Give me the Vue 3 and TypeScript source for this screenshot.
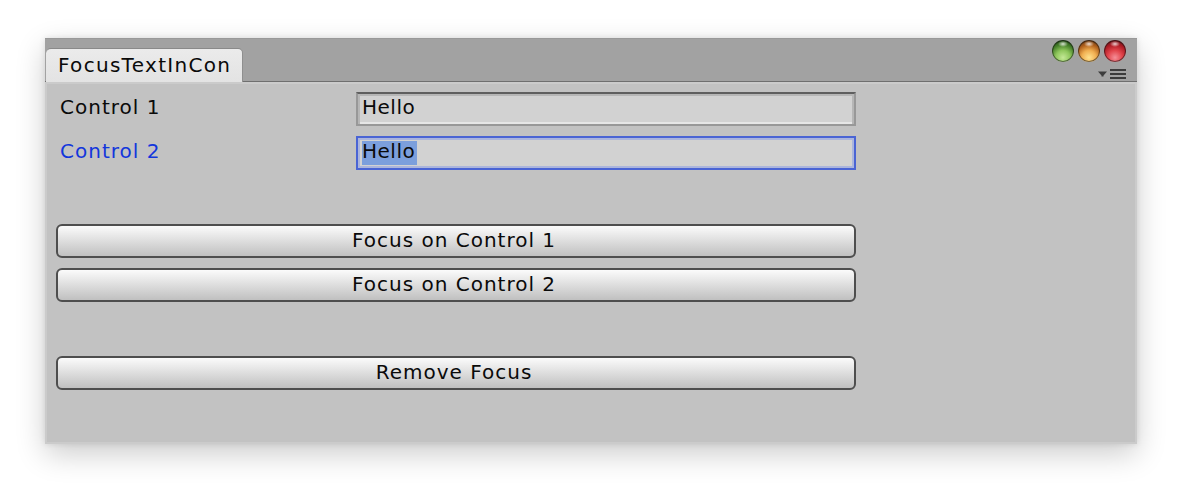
<script setup lang="ts">
const fields = [
  { label: 'Control 1', value: 'Hello', focused: false },
  { label: 'Control 2', value: 'Hello', focused: true },
]
const lights = ['green', 'orange', 'red']
const group1 = ['Focus on Control 1', 'Focus on Control 2']
</script>

<template>
  <div class="page">
    <div class="window">
      <div class="titlebar">
        <div class="tab">FocusTextInCon</div>
        <div class="controls">
          <div class="lights">
            <span v-for="l in lights" :key="l" class="light" :class="l"></span>
          </div>
          <svg class="menu" width="29" height="11" viewBox="0 0 29 11">
            <path d="M0 2.5h9L5.5 6.5v1h-2v-1z" fill="#3c3c3c" />
            <path d="M12 1h16M12 5h16M12 9h16" stroke="#3c3c3c" stroke-width="2" />
          </svg>
        </div>
      </div>
      <div class="content">
        <div class="rows">
          <div v-for="f in fields" :key="f.label" class="row">
            <span class="label" :class="{ active: f.focused }">{{ f.label }}</span>
            <div class="field" :class="{ focused: f.focused }">
              <span class="value">{{ f.value }}</span>
            </div>
          </div>
        </div>
        <div class="buttons">
          <button v-for="b in group1" :key="b" class="btn">{{ b }}</button>
        </div>
        <div class="buttons">
          <button class="btn">Remove Focus</button>
        </div>
      </div>
    </div>
  </div>
</template>

<style>
html, body { margin: 0; background: #fff; }
</style>

<style scoped>
.page {
  width: 1182px;
  height: 498px;
  padding: 38px 45px 0;
  box-sizing: border-box;
  overflow: hidden;
  font-family: "DejaVu Sans", sans-serif;
  font-size: 20px;
  letter-spacing: 1px;
  color: #0a0a0a;
}
.window {
  width: 1092px;
  height: 406px;
  display: flex;
  flex-direction: column;
  box-shadow: 0 10px 28px rgba(0, 0, 0, 0.2), 0 0 6px rgba(0, 0, 0, 0.1);
}
.titlebar {
  flex: none;
  display: flex;
  justify-content: space-between;
  align-items: flex-end;
  height: 42px;
  padding-left: 1px;
  background: #a2a2a2;
  border-top: 1px solid #999;
  border-bottom: 1px solid #6f6f6f;
}
.tab {
  width: 197px;
  height: 34px;
  margin-bottom: -1px;
  box-sizing: border-box;
  padding-left: 12px;
  line-height: 32px;
  letter-spacing: 1.3px;
  background: linear-gradient(#ebebeb, #e3e3e3);
  border-radius: 5px 5px 0 0;
  border-top: 1px solid #8a8a8a;
  border-right: 1px solid #8f8f8f;
  white-space: nowrap;
  overflow: hidden;
}
.controls {
  display: flex;
  flex-direction: column;
  align-items: flex-end;
  padding-right: 10px;
  height: 100%;
  box-sizing: border-box;
}
.lights {
  display: flex;
  gap: 4px;
  padding-top: 1px;
  margin-right: 1px;
}
.light {
  width: 22px;
  height: 22px;
  border-radius: 50%;
  box-sizing: border-box;
  box-shadow: inset 0 0 0 1px rgba(20, 20, 20, 0.55);
}
.green {
  background:
    radial-gradient(ellipse 5px 3px at 50% 18%, rgba(255, 255, 255, 0.8), rgba(255, 255, 255, 0) 100%),
    radial-gradient(circle 18px at 50% 80%, #c4e896 0, #8fc75c 40%, #46802a 72%, #1f4414 100%);
}
.orange {
  background:
    radial-gradient(ellipse 5px 3px at 50% 18%, rgba(255, 255, 255, 0.8), rgba(255, 255, 255, 0) 100%),
    radial-gradient(circle 18px at 50% 80%, #ffe28e 0, #f0ae50 40%, #b0601c 72%, #63350f 100%);
}
.red {
  background:
    radial-gradient(ellipse 5px 3px at 50% 18%, rgba(255, 255, 255, 0.8), rgba(255, 255, 255, 0) 100%),
    radial-gradient(circle 18px at 50% 80%, #f58f98 0, #e2454c 40%, #ae1c25 72%, #641216 100%);
}
.menu {
  margin-top: 7px;
  display: block;
}
.content {
  flex: 1;
  min-height: 0;
  display: flex;
  flex-direction: column;
  gap: 54px;
  padding: 8px 0 0 9px;
  background: #c2c2c2;
  border: 2px solid #cbcbcb;
  box-sizing: border-box;
}
.rows,
.buttons {
  display: flex;
  flex-direction: column;
  gap: 10px;
}
.row {
  display: flex;
  align-items: center;
  height: 34px;
}
.label {
  width: 300px;
  padding-left: 4px;
  box-sizing: border-box;
  position: relative;
  top: -2px;
}
.active {
  color: #1236dc;
}
.field {
  width: 500px;
  height: 34px;
  box-sizing: border-box;
  padding: 3px 4px 0;
  display: flex;
  align-items: flex-start;
  background: #d2d2d2;
  border: 2px solid #989898;
  border-top-color: #5f5f5f;
  box-shadow: inset 0 2px 0 #b6b6b6, inset 2px 0 0 #b6b6b6, inset -2px 0 0 #b6b6b6, inset 0 -2px 0 #e6e6e6;
}
.field .value {
  display: block;
  line-height: 21px;
  padding: 0 2px 3px 0;
  letter-spacing: 0.5px;
}
.field.focused {
  border-color: #4a64d4;
  box-shadow: inset 0 0 0 2px #abb5dc;
}
.focused .value {
  background: #7c9fdc;
}
.btn {
  display: block;
  width: 800px;
  height: 34px;
  padding: 0 4px 3px 0;
  box-sizing: border-box;
  border: 2px solid #4e4e4e;
  border-radius: 6px;
  background: linear-gradient(#fbfbfb, #c0c0c0);
  font-family: inherit;
  font-size: 20px;
  letter-spacing: 1px;
  color: #0a0a0a;
}
</style>
